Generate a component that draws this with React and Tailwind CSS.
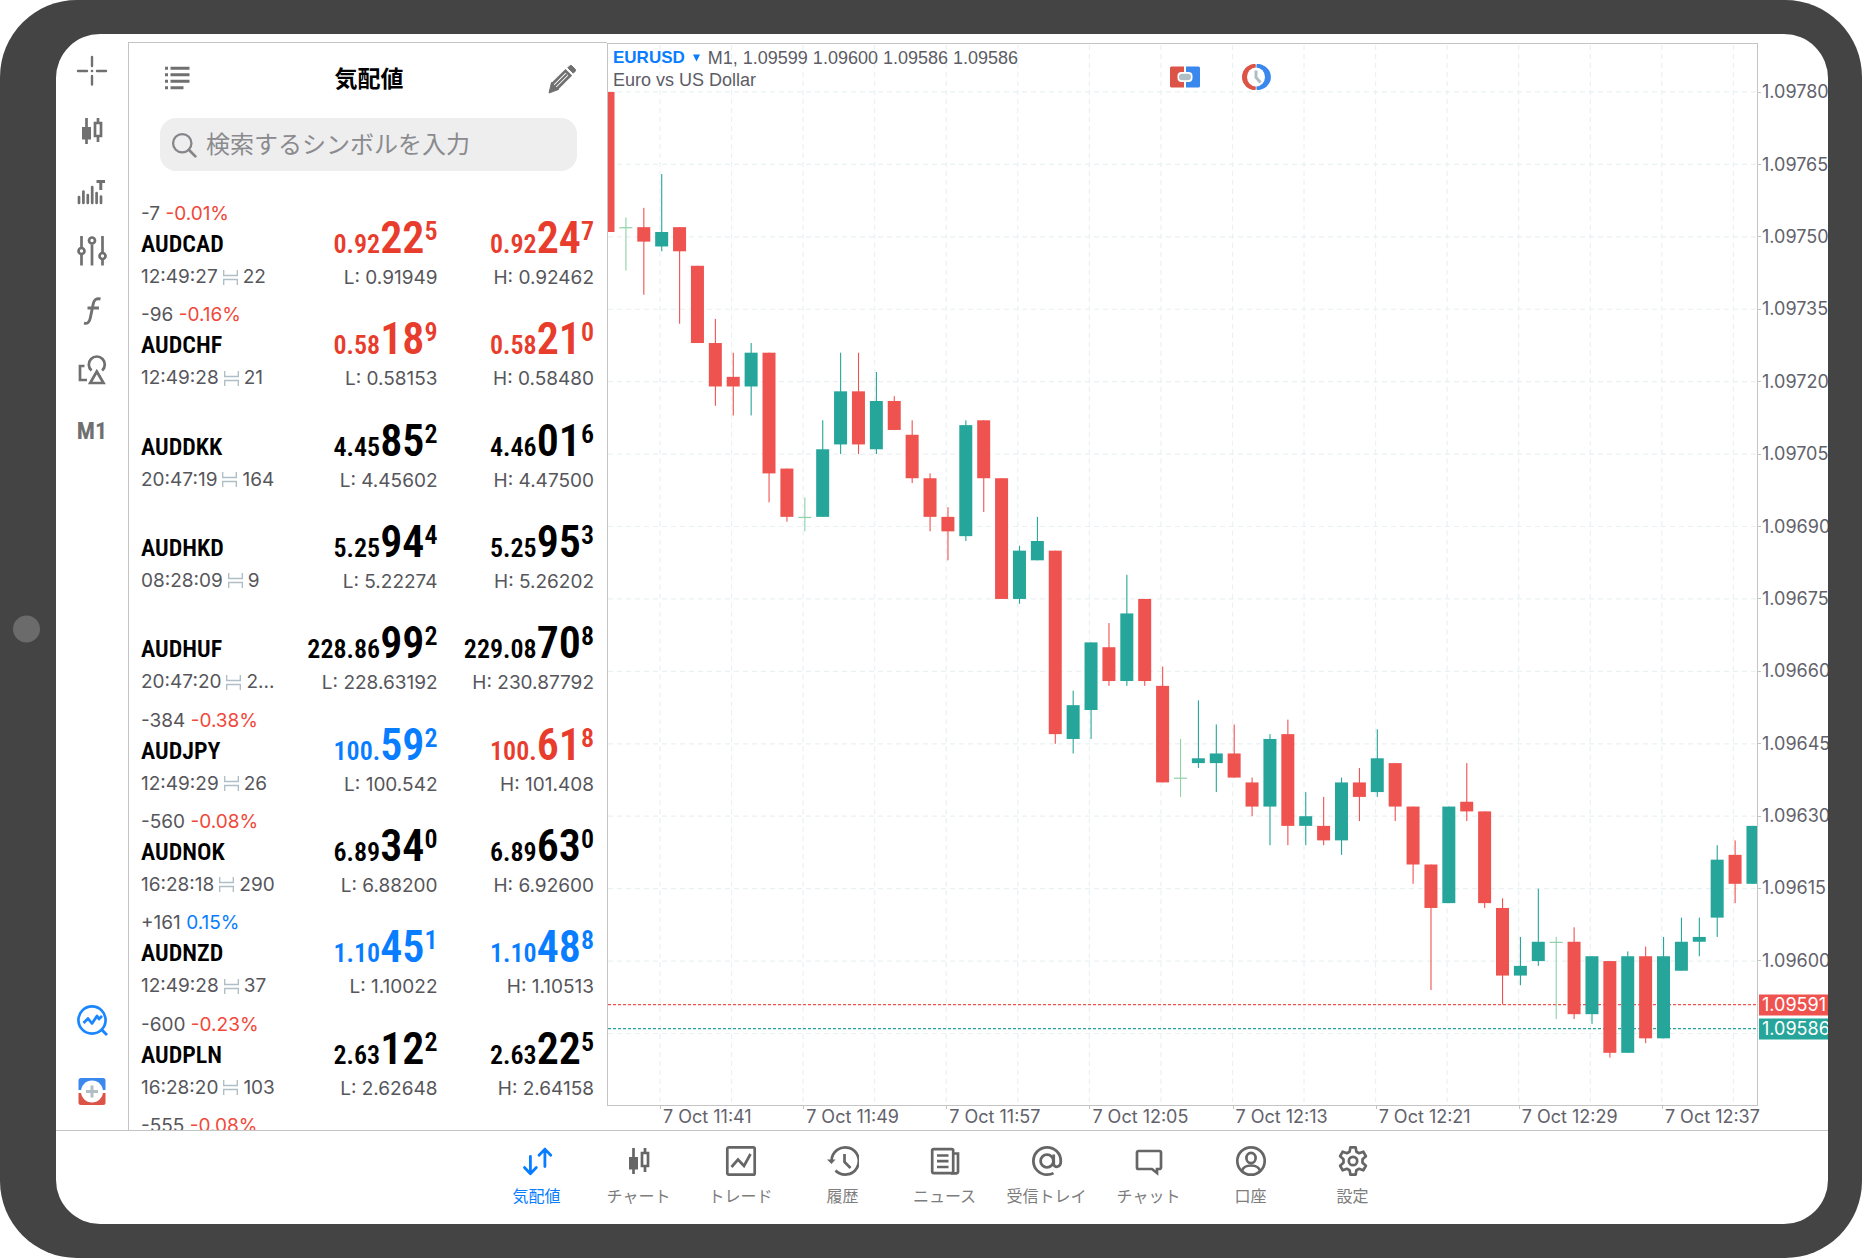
import React from "react";

const UP = "#26a69a";
const DOWN = "#ef5350";
const DOJI = "#8fd0a9";

const TOP_PAD = 48;
const UNIT = 4.833;
const PITCH = 17.89;
const PLOT_W = 1149;
const PLOT_H = 1062;

// Each bar: [open, close, high, low] in points below 1.09780.
const CANDLES = [
  [0, 29, 0, 29], [28, 28, 26, 37], [28, 31, 24, 42], [32, 29, 17, 33], [28, 33, 28, 48],
  [36, 52, 36, 52], [52, 61, 47, 65], [59, 61, 54, 67], [61, 54, 52, 67], [54, 79, 54, 85],
  [78, 88, 78, 89], [88, 88, 84, 91], [88, 74, 68, 88], [73, 62, 54, 75], [62, 73, 54, 75],
  [74, 64, 58, 75], [64, 70, 63, 70], [71, 80, 68, 81], [80, 88, 79, 91], [88, 91, 86, 97],
  [92, 69, 68, 93], [68, 80, 68, 87], [80, 105, 80, 105], [105, 95, 94, 106], [97, 93, 88, 97],
  [95, 133, 95, 135], [134, 127, 124, 137], [128, 114, 114, 134], [115, 122, 110, 123],
  [122, 108, 100, 123], [105, 122, 105, 123], [123, 143, 119, 143], [142, 142, 134, 146],
  [139, 138, 126, 140], [139, 137, 131, 145], [137, 142, 131, 142], [143, 148, 142, 150],
  [148, 134, 133, 156], [133, 152, 130, 156], [152, 150, 145, 156], [152, 155, 146, 156],
  [155, 143, 142, 158], [143, 146, 140, 151], [145, 138, 132, 146], [139, 148, 139, 151],
  [148, 160, 148, 164], [160, 169, 160, 186], [168, 148, 148, 168], [147, 149, 139, 151],
  [149, 168, 149, 169], [169, 183, 167, 189], [183, 181, 175, 185], [180, 176, 165, 181],
  [176, 176, 175, 192], [176, 191, 173, 192], [191, 179, 179, 193], [180, 199, 180, 200],
  [199, 179, 178, 199], [179, 196, 177, 197], [196, 179, 175, 196], [182, 176, 171, 182],
  [176, 175, 171, 179], [171, 159, 156, 175], [158, 164, 155, 168], [164, 152, 152, 164],
];

const PRICES = [
  "1.09780", "1.09765", "1.09750", "1.09735", "1.09720", "1.09705", "1.09690",
  "1.09675", "1.09660", "1.09645", "1.09630", "1.09615", "1.09600",
];

const TIMES = ["11:41", "11:49", "11:57", "12:05", "12:13", "12:21", "12:29", "12:37"];

const QUOTES = [
  { s: "AUDCAD", pts: "-7", pct: "-0.01%", dir: -1, time: "12:49:27", spread: "22", bid: ["0.92", "22", "5", "r"], ask: ["0.92", "24", "7", "r"], low: "0.91949", high: "0.92462" },
  { s: "AUDCHF", pts: "-96", pct: "-0.16%", dir: -1, time: "12:49:28", spread: "21", bid: ["0.58", "18", "9", "r"], ask: ["0.58", "21", "0", "r"], low: "0.58153", high: "0.58480" },
  { s: "AUDDKK", time: "20:47:19", spread: "164", bid: ["4.45", "85", "2", "k"], ask: ["4.46", "01", "6", "k"], low: "4.45602", high: "4.47500" },
  { s: "AUDHKD", time: "08:28:09", spread: "9", bid: ["5.25", "94", "4", "k"], ask: ["5.25", "95", "3", "k"], low: "5.22274", high: "5.26202" },
  { s: "AUDHUF", time: "20:47:20", spread: "2...", bid: ["228.86", "99", "2", "k"], ask: ["229.08", "70", "8", "k"], low: "228.63192", high: "230.87792" },
  { s: "AUDJPY", pts: "-384", pct: "-0.38%", dir: -1, time: "12:49:29", spread: "26", bid: ["100.", "59", "2", "b"], ask: ["100.", "61", "8", "r"], low: "100.542", high: "101.408" },
  { s: "AUDNOK", pts: "-560", pct: "-0.08%", dir: -1, time: "16:28:18", spread: "290", bid: ["6.89", "34", "0", "k"], ask: ["6.89", "63", "0", "k"], low: "6.88200", high: "6.92600" },
  { s: "AUDNZD", pts: "+161", pct: "0.15%", dir: 1, time: "12:49:28", spread: "37", bid: ["1.10", "45", "1", "b"], ask: ["1.10", "48", "8", "b"], low: "1.10022", high: "1.10513" },
  { s: "AUDPLN", pts: "-600", pct: "-0.23%", dir: -1, time: "16:28:20", spread: "103", bid: ["2.63", "12", "2", "k"], ask: ["2.63", "22", "5", "k"], low: "2.62648", high: "2.64158" },
];

const TONE = { r: "text-[#e83c2c]", k: "text-black", b: "text-[#087dff]" };

const Svg = ({ children, className = "size-8" }) => (
  <svg viewBox="0 0 32 32" className={className} fill="none" stroke="currentColor" strokeWidth="2.7" aria-hidden="true">
    {children}
  </svg>
);

const CrosshairIcon = () => (
  <Svg>
    <path d="M16 2v9M16 21v8.500M2 16h9M21 16h9" strokeLinecap="round" strokeWidth="2.4" />
    <circle cx="16" cy="16" r="1.3" fill="currentColor" stroke="none" />
  </Svg>
);

const CandlesIcon = () => (
  <Svg>
    <path d="M10.5 3v26" />
    <rect x="6" y="12" width="9" height="12.5" fill="currentColor" stroke="none" />
    <path d="M22 3v4M22 22v5M19 8h6v13h-6z" />
  </Svg>
);

const VolumesIcon = () => (
  <Svg>
    <path d="M3 22v6M7.4 16.500v11.500M11.800 20v8M16.200 12v16M20.600 18v10M25 21.500v6.500" strokeLinecap="round" />
    <path d="M20.500 6.500h8.500M24.800 6v9" strokeWidth="3" />
  </Svg>
);

const SlidersIcon = () => (
  <Svg>
    <path d="M5.500 1v11.500M5.500 19.500v11M16 9.500v21M26.500 1v16.500M26.500 24.500v6" />
    <circle cx="5.500" cy="16" r="3" />
    <circle cx="16" cy="5.500" r="3" />
    <circle cx="26.500" cy="21" r="3" />
  </Svg>
);

const FunctionIcon = () => (
  <Svg>
    <path d="M24.500 4c-4-1-6.300.5-7.200 4.500l-3 14.500c-.9 4.300-2.800 6-6.300 5.200M11.500 13h11.500" strokeWidth="2.900" />
  </Svg>
);

const ShapesIcon = () => (
  <Svg>
    <path d="M8.500 11H4V25h7" />
    <path d="M15.500 15.500a8 8 0 1 1 10.600 0" />
    <path d="M20.800 16.500l6.700 11.500H14.200z" />
  </Svg>
);

const ScanIcon = () => (
  <Svg>
    <circle cx="16" cy="15" r="13.600" />
    <path d="M25 24l6 6" strokeWidth="3" />
    <path d="M7.500 18l4.500-4.500 4 5 5-7.500 2 3 3-3" strokeWidth="2.800" strokeLinejoin="round" />
  </Svg>
);

const OrderIcon = () => (
  <Svg>
    <path d="M5 3h22a2.500 2.500 0 0 1 2.500 2.500V15h-27V5.500A2.500 2.500 0 0 1 5 3z" fill="#3a88ee" stroke="none" />
    <path d="M2.500 18h27v9.500A2.500 2.500 0 0 1 27 30H5a2.500 2.500 0 0 1-2.500-2.500z" fill="#dc5347" stroke="none" />
    <circle cx="16" cy="16.500" r="11" fill="#fff" stroke="none" />
    <path d="M16 10.500v12M10 16.500h12" stroke="#b0bec5" strokeWidth="3" />
  </Svg>
);

const ListIcon = () => (
  <Svg>
    <path d="M4 5.200h3M4 11.700h3M4 18.200h3M4 24.700h3M9.500 5.200h19M9.500 11.700h19M9.500 18.200h19M9.500 24.700h13" strokeWidth="3" />
  </Svg>
);

const PencilIcon = () => (
  <Svg>
    <path d="M6.800 21.500L20.500 7.800l4.700 4.700L11.500 26.200" strokeWidth="2.700" />
    <path d="M9.800 23.200L21.800 11.200" strokeWidth="2.200" />
    <path d="M6.500 19.500l7 7-9.500 3.500z" fill="currentColor" strokeWidth="1" />
    <path d="M22.800 4.800l2-2a1.500 1.500 0 0 1 2 0l3.400 3.400a1.500 1.500 0 0 1 0 2l-2 2z" fill="currentColor" strokeWidth="1" />
  </Svg>
);

const SearchIcon = () => (
  <Svg className="size-7 shrink-0">
    <circle cx="14" cy="14" r="10.500" strokeWidth="2.600" />
    <path d="M21.500 21.500l7.500 7.500" strokeWidth="3.200" strokeLinecap="round" />
  </Svg>
);

const ArrowsIcon = () => (
  <Svg>
    <path d="M9.400 11.500v17M3.500 22.500l5.900 6.200 5.900-6.200M23.900 21.500V4.500M18 10.300l5.900-6.200 5.900 6.200" strokeWidth="2.800" strokeLinecap="round" strokeLinejoin="round" />
  </Svg>
);

const TradeIcon = () => (
  <Svg>
    <rect x="2.300" y="2.300" width="27.400" height="27.400" rx="1.500" />
    <path d="M6.500 22l6.500-7.500 6 6.500 6.500-12" />
  </Svg>
);

const HistoryIcon = () => (
  <Svg>
    <path d="M4.600 15.500A13.600 13.600 0 1 1 8.500 25.500" />
    <path d="M0 14.500h8.500L4.500 19z" fill="currentColor" stroke="none" />
    <path d="M17.500 9v8l6 6" />
  </Svg>
);

const NewsIcon = () => (
  <Svg>
    <rect x="3.200" y="4.200" width="21" height="24" rx="1.500" />
    <path d="M24.500 8.500h4.500V27a1.500 1.500 0 0 1-1.500 1.300H22M8 10.500h11.500M8 16.200h11.500M8 22h11.500" />
  </Svg>
);

const AtIcon = () => (
  <Svg>
    <circle cx="16" cy="16" r="6.400" strokeWidth="2.800" />
    <path d="M22.700 9.500v9.200c0 4.500 7.100 4.500 7.100-2.700A13.700 13.700 0 1 0 16 29.700c2.500 0 4.500-.4 6.500-1.600" strokeWidth="2.800" />
  </Svg>
);

const ChatIcon = () => (
  <Svg>
    <path d="M5.500 6h21a1.500 1.500 0 0 1 1.500 1.500v15a1.500 1.500 0 0 1-1.500 1.500H24v4l-5-4H5.500A1.500 1.500 0 0 1 4 22.500v-15A1.500 1.500 0 0 1 5.500 6z" />
  </Svg>
);

const AccountIcon = () => (
  <Svg>
    <circle cx="16" cy="16" r="13.700" />
    <ellipse cx="16" cy="13" rx="4.600" ry="5.200" />
    <path d="M7 26c1-4 3.500-5.500 9-5.500s8 1.500 9 5.500" />
  </Svg>
);

const GearIcon = () => (
  <Svg>
    <path d="M13.400 2.300h5.200l.8 4.400 2.700 1.500 4.200-1.500 2.600 4.500-3.400 3v3.600l3.400 3-2.600 4.500-4.200-1.500-2.700 1.500-.8 4.400h-5.200l-.8-4.400-2.700-1.500-4.200 1.500-2.600-4.500 3.400-3v-3.600l-3.400-3 2.600-4.500 4.200 1.500 2.700-1.500z" strokeLinejoin="round" />
    <circle cx="16" cy="16" r="4.200" />
  </Svg>
);

const SpreadIcon = () => (
  <svg viewBox="0 0 16 16" className="mx-[5px] size-[15px] shrink-0" fill="none" stroke="#b0bec5" strokeWidth="1.500" aria-hidden="true">
    <path d="M.7 0v5.800h14.600V0M.7 16v-5.800h14.600V16" />
  </svg>
);

const RAIL = [
  ["十字カーソル", CrosshairIcon],
  ["チャート", CandlesIcon],
  ["ボリューム", VolumesIcon],
  ["設定", SlidersIcon],
  ["インディケータ", FunctionIcon],
  ["オブジェクト", ShapesIcon],
];

const TABS = [
  ["気配値", ArrowsIcon],
  ["チャート", CandlesIcon],
  ["トレード", TradeIcon],
  ["履歴", HistoryIcon],
  ["ニュース", NewsIcon],
  ["受信トレイ", AtIcon],
  ["チャット", ChatIcon],
  ["口座", AccountIcon],
  ["設定", GearIcon],
];

function ToolRail() {
  return (
    <aside className="flex w-[72px] shrink-0 flex-col items-center pt-[7px] pb-1 text-[#707070]">
      {RAIL.map(([label, Icon]) => (
        <button key={label} aria-label={label} className="flex h-[60px] w-full items-center justify-center">
          <Icon />
        </button>
      ))}
      <button className="h-[60px] w-full font-['Roboto_Condensed','Liberation_Sans_Narrow',Roboto,sans-serif] text-2xl font-bold">M1</button>
      <button aria-label="ウォッチ" className="mt-auto flex h-[70px] w-full items-center justify-center text-[#1a86ff]">
        <ScanIcon />
      </button>
      <button aria-label="新規注文" className="flex h-[70px] w-full items-center justify-center">
        <OrderIcon />
      </button>
    </aside>
  );
}

function Price({ parts, label, value }) {
  const [small, big, sup, tone] = parts;
  return (
    <td className="p-0 pt-[13px] text-right align-top whitespace-nowrap">
      <div className={`font-['Roboto_Condensed','Liberation_Sans_Narrow',Roboto,sans-serif] text-[44px] leading-[48px] font-semibold ${TONE[tone]}`}>
        <span className="text-[26px] leading-none">{small}</span>
        {big}
        <span className="align-[13px] text-[26px] leading-none">{sup}</span>
      </div>
      <div className="text-[19px] leading-8 text-[#56565b]">
        {label}: {value}
      </div>
    </td>
  );
}

function Change({ pts, pct, dir }) {
  return (
    <div className="h-[26px] text-[19px] leading-[26px] text-[#56565b]">
      {pts} <span className={dir > 0 ? "text-[#087dff]" : "text-[#f0483a]"}>{pct}</span>
    </div>
  );
}

function Watchlist() {
  return (
    <section className="mt-2 flex w-[479px] shrink-0 flex-col overflow-hidden border-t border-l border-[#c4c4c4]">
      <header className="flex h-[72px] shrink-0 items-center justify-between pr-[30px] pl-8 text-[#707070]">
        <button aria-label="リスト"><ListIcon /></button>
        <h1 className="text-[23px] font-bold text-black">気配値</h1>
        <button aria-label="編集"><PencilIcon /></button>
      </header>
      <label className="mt-[3px] ml-[31px] mr-[30px] flex h-[53px] shrink-0 items-center gap-2 rounded-2xl bg-[#eeeeee] pl-[10px] text-[#85858a]">
        <SearchIcon />
        <input
          aria-label="検索"
          placeholder="検索するシンボルを入力"
          className="min-w-0 flex-1 bg-transparent text-2xl outline-none placeholder:text-[#8a8a8f]"
        />
      </label>
      <div className="mt-[30px] min-h-0 flex-1 overflow-hidden pr-[13px] pl-3">
        <table className="h-[912px] w-full table-fixed border-collapse">
          <tbody>
            {QUOTES.map((q) => (
              <tr key={q.s}>
                <td className="w-[140px] p-0 align-top whitespace-nowrap">
                  <Change pts={q.pts} pct={q.pct} dir={q.dir} />
                  <div className="font-['Roboto_Condensed','Liberation_Sans_Narrow',Roboto,sans-serif] text-2xl leading-[35px] font-semibold text-black">{q.s}</div>
                  <div className="flex items-center text-[19px] leading-[30px] text-[#56565b]">
                    {q.time}
                    <SpreadIcon />
                    {q.spread}
                  </div>
                </td>
                <Price parts={q.bid} label="L" value={q.low} />
                <Price parts={q.ask} label="H" value={q.high} />
              </tr>
            ))}
          </tbody>
        </table>
        <Change pts="-555" pct="-0.08%" dir={-1} />
      </div>
    </section>
  );
}

const yOf = (d) => TOP_PAD + d * UNIT;

function CandleChart() {
  const columns = Array.from({ length: 16 }, (_, i) => 52 + i * PITCH * 4);
  const rows = Array.from({ length: 14 }, (_, i) => yOf(i * 15));
  return (
    <svg viewBox={`0 0 ${PLOT_W} ${PLOT_H}`} preserveAspectRatio="none" className="block h-full w-full" role="img" aria-label="EURUSD M1">
      <g stroke="#e9f1f4" strokeWidth="1.200" strokeDasharray="5 4">
        {columns.map((x) => <path key={x} d={`M${x} 1V${PLOT_H}`} />)}
        {rows.map((y) => <path key={y} d={`M0 ${y}H${PLOT_W}`} />)}
      </g>
      <path d={`M0 ${yOf(189)}H${PLOT_W}`} stroke={DOWN} strokeWidth="1.300" strokeDasharray="3 2" />
      <path d={`M0 ${yOf(194)}H${PLOT_W}`} stroke={UP} strokeWidth="1.300" strokeDasharray="3 2" />
      {CANDLES.map(([open, close, high, low], i) => {
        const x = i * PITCH;
        const color = open === close ? DOJI : close > open ? DOWN : UP;
        const top = yOf(Math.min(open, close));
        const height = Math.max(Math.abs(close - open) * UNIT, 1.2);
        return (
          <g key={i} fill={color}>
            <rect x={x - 0.5} y={yOf(high)} width="1.100" height={(low - high) * UNIT} />
            <rect x={x - 6.5} y={top} width="13" height={height} />
          </g>
        );
      })}
    </svg>
  );
}

function ChartPanel() {
  return (
    <section className="mt-[9px] flex min-w-0 flex-1 flex-col">
      <div className="flex min-h-0 flex-1">
        <div className="relative min-w-0 flex-1 border border-[#c4c4c4]">
          <CandleChart />
          <div className="absolute inset-x-0 top-0 flex items-start pt-[3px] pl-[5px] font-['Liberation_Sans',Arial,sans-serif] text-lg leading-[22px] text-[#5c5c66]">
            <div className="w-[556px] shrink-0 whitespace-nowrap">
              <div className="flex items-center">
                <button className="flex items-center gap-2 text-[17px] font-bold text-[#087dff]">
                  EURUSD
                  <svg viewBox="0 0 8 8" className="h-2 w-[7px]" fill="currentColor" aria-hidden="true"><path d="M0 0h8L4 8z" /></svg>
                </button>
                <span className="ml-2">M1, 1.09599 1.09600 1.09586 1.09586</span>
              </div>
              <div>Euro vs US Dollar</div>
            </div>
            <div className="mt-[14px] flex gap-[39px]">
              <button aria-label="ワンクリック取引">
                <svg viewBox="0 0 32 32" className="size-8">
                  <path d="M2.500 5.500H15v21H2.500A1.500 1.500 0 0 1 1 25V7a1.500 1.500 0 0 1 1.500-1.500z" fill="#dc5347" />
                  <path d="M17 5.500h12.500A1.500 1.500 0 0 1 31 7v18a1.500 1.500 0 0 1-1.500 1.500H17z" fill="#3a88ee" />
                  <rect x="8.500" y="11" width="15" height="10" rx="4" fill="#fff" />
                  <rect x="10" y="12.700" width="12" height="6.600" rx="3.300" fill="#b0bec5" />
                </svg>
              </button>
              <button aria-label="取引時間">
                <svg viewBox="0 0 32 32" className="size-8" fill="none">
                  <path d="M15.200 3.500v25A12.500 12.500 0 0 1 15.200 3.500z" fill="#dc5347" stroke="#dc5347" strokeWidth="1" />
                  <path d="M17 3.500v25A12.500 12.500 0 0 0 17 3.500z" fill="#3a88ee" stroke="#3a88ee" strokeWidth="1" />
                  <path d="M15.500 3a13 13 0 0 0 0 26z" fill="#dc5347" transform="translate(-.4 0)" />
                  <path d="M16.500 3a14 13 0 0 1 0 26z" fill="#3a88ee" transform="translate(.4 0)" />
                  <ellipse cx="16" cy="16" rx="9" ry="9.500" fill="#fff" />
                  <path d="M16 9.500v7l4.500 5" stroke="#b0bec5" strokeWidth="3" />
                </svg>
              </button>
            </div>
          </div>
        </div>
        <div className="relative flex w-[70px] shrink-0 flex-col overflow-hidden pt-[13px] pb-[109px] text-lg text-[#62626b]">
          {PRICES.map((p) => (
            <div key={p} className="flex min-h-0 flex-1 items-center">
              <span className="mr-px h-px w-[3px] shrink-0 bg-[#c4c4c4]" />
              {p}
            </div>
          ))}
          <div className="absolute inset-x-0 ml-px flex h-[21px] -translate-y-1/2 items-center bg-[#ef5350] pl-[3px] text-white" style={{ top: `${((yOf(189) + 1) / (PLOT_H + 2)) * 100}%` }}>
            1.09591
          </div>
          <div className="absolute inset-x-0 ml-px flex h-[21px] -translate-y-1/2 items-center bg-[#26a69a] pl-[3px] text-white" style={{ top: `${((yOf(194) + 1) / (PLOT_H + 2)) * 100}%` }}>
            1.09586
          </div>
        </div>
      </div>
      <div className="flex h-6 shrink-0 pr-[23px] pl-[53px] text-lg leading-[22px] text-[#62626b]">
        {TIMES.map((t) => (
          <div key={t} className="flex min-w-0 flex-1 items-start whitespace-nowrap">
            <span className="mr-0.5 h-[3px] w-px shrink-0 bg-[#c4c4c4]" />
            7 Oct {t}
          </div>
        ))}
      </div>
    </section>
  );
}

export default function App() {
  return (
    <div className="h-screen bg-white font-[Inter,'Noto_Sans_CJK_JP',sans-serif]">
      <div className="relative h-full rounded-[77px] bg-[#444444] pt-[34px] pr-[34px] pb-[34px] pl-14">
        <span className="absolute top-1/2 left-[13px] size-[27px] -translate-y-1/2 rounded-full bg-[#6b6b6b]" />
        <main className="flex h-full flex-col overflow-hidden rounded-[44px] bg-white">
          <div className="flex min-h-0 flex-1">
            <ToolRail />
            <Watchlist />
            <ChartPanel />
          </div>
          <nav className="flex h-[94px] shrink-0 justify-center border-t border-[#c4c4c4] pl-[5px]">
            {TABS.map(([label, Icon], i) => (
              <button
                key={label}
                className={`flex w-[102px] flex-col items-center pt-[14px] text-base leading-6 ${i === 0 ? "text-[#087dff]" : "text-[#666666]"}`}
              >
                <Icon />
                <span className={i === 0 ? "mt-[7px]" : "mt-[7px] text-[#7d7d7d]"}>{label}</span>
              </button>
            ))}
          </nav>
        </main>
      </div>
    </div>
  );
}
